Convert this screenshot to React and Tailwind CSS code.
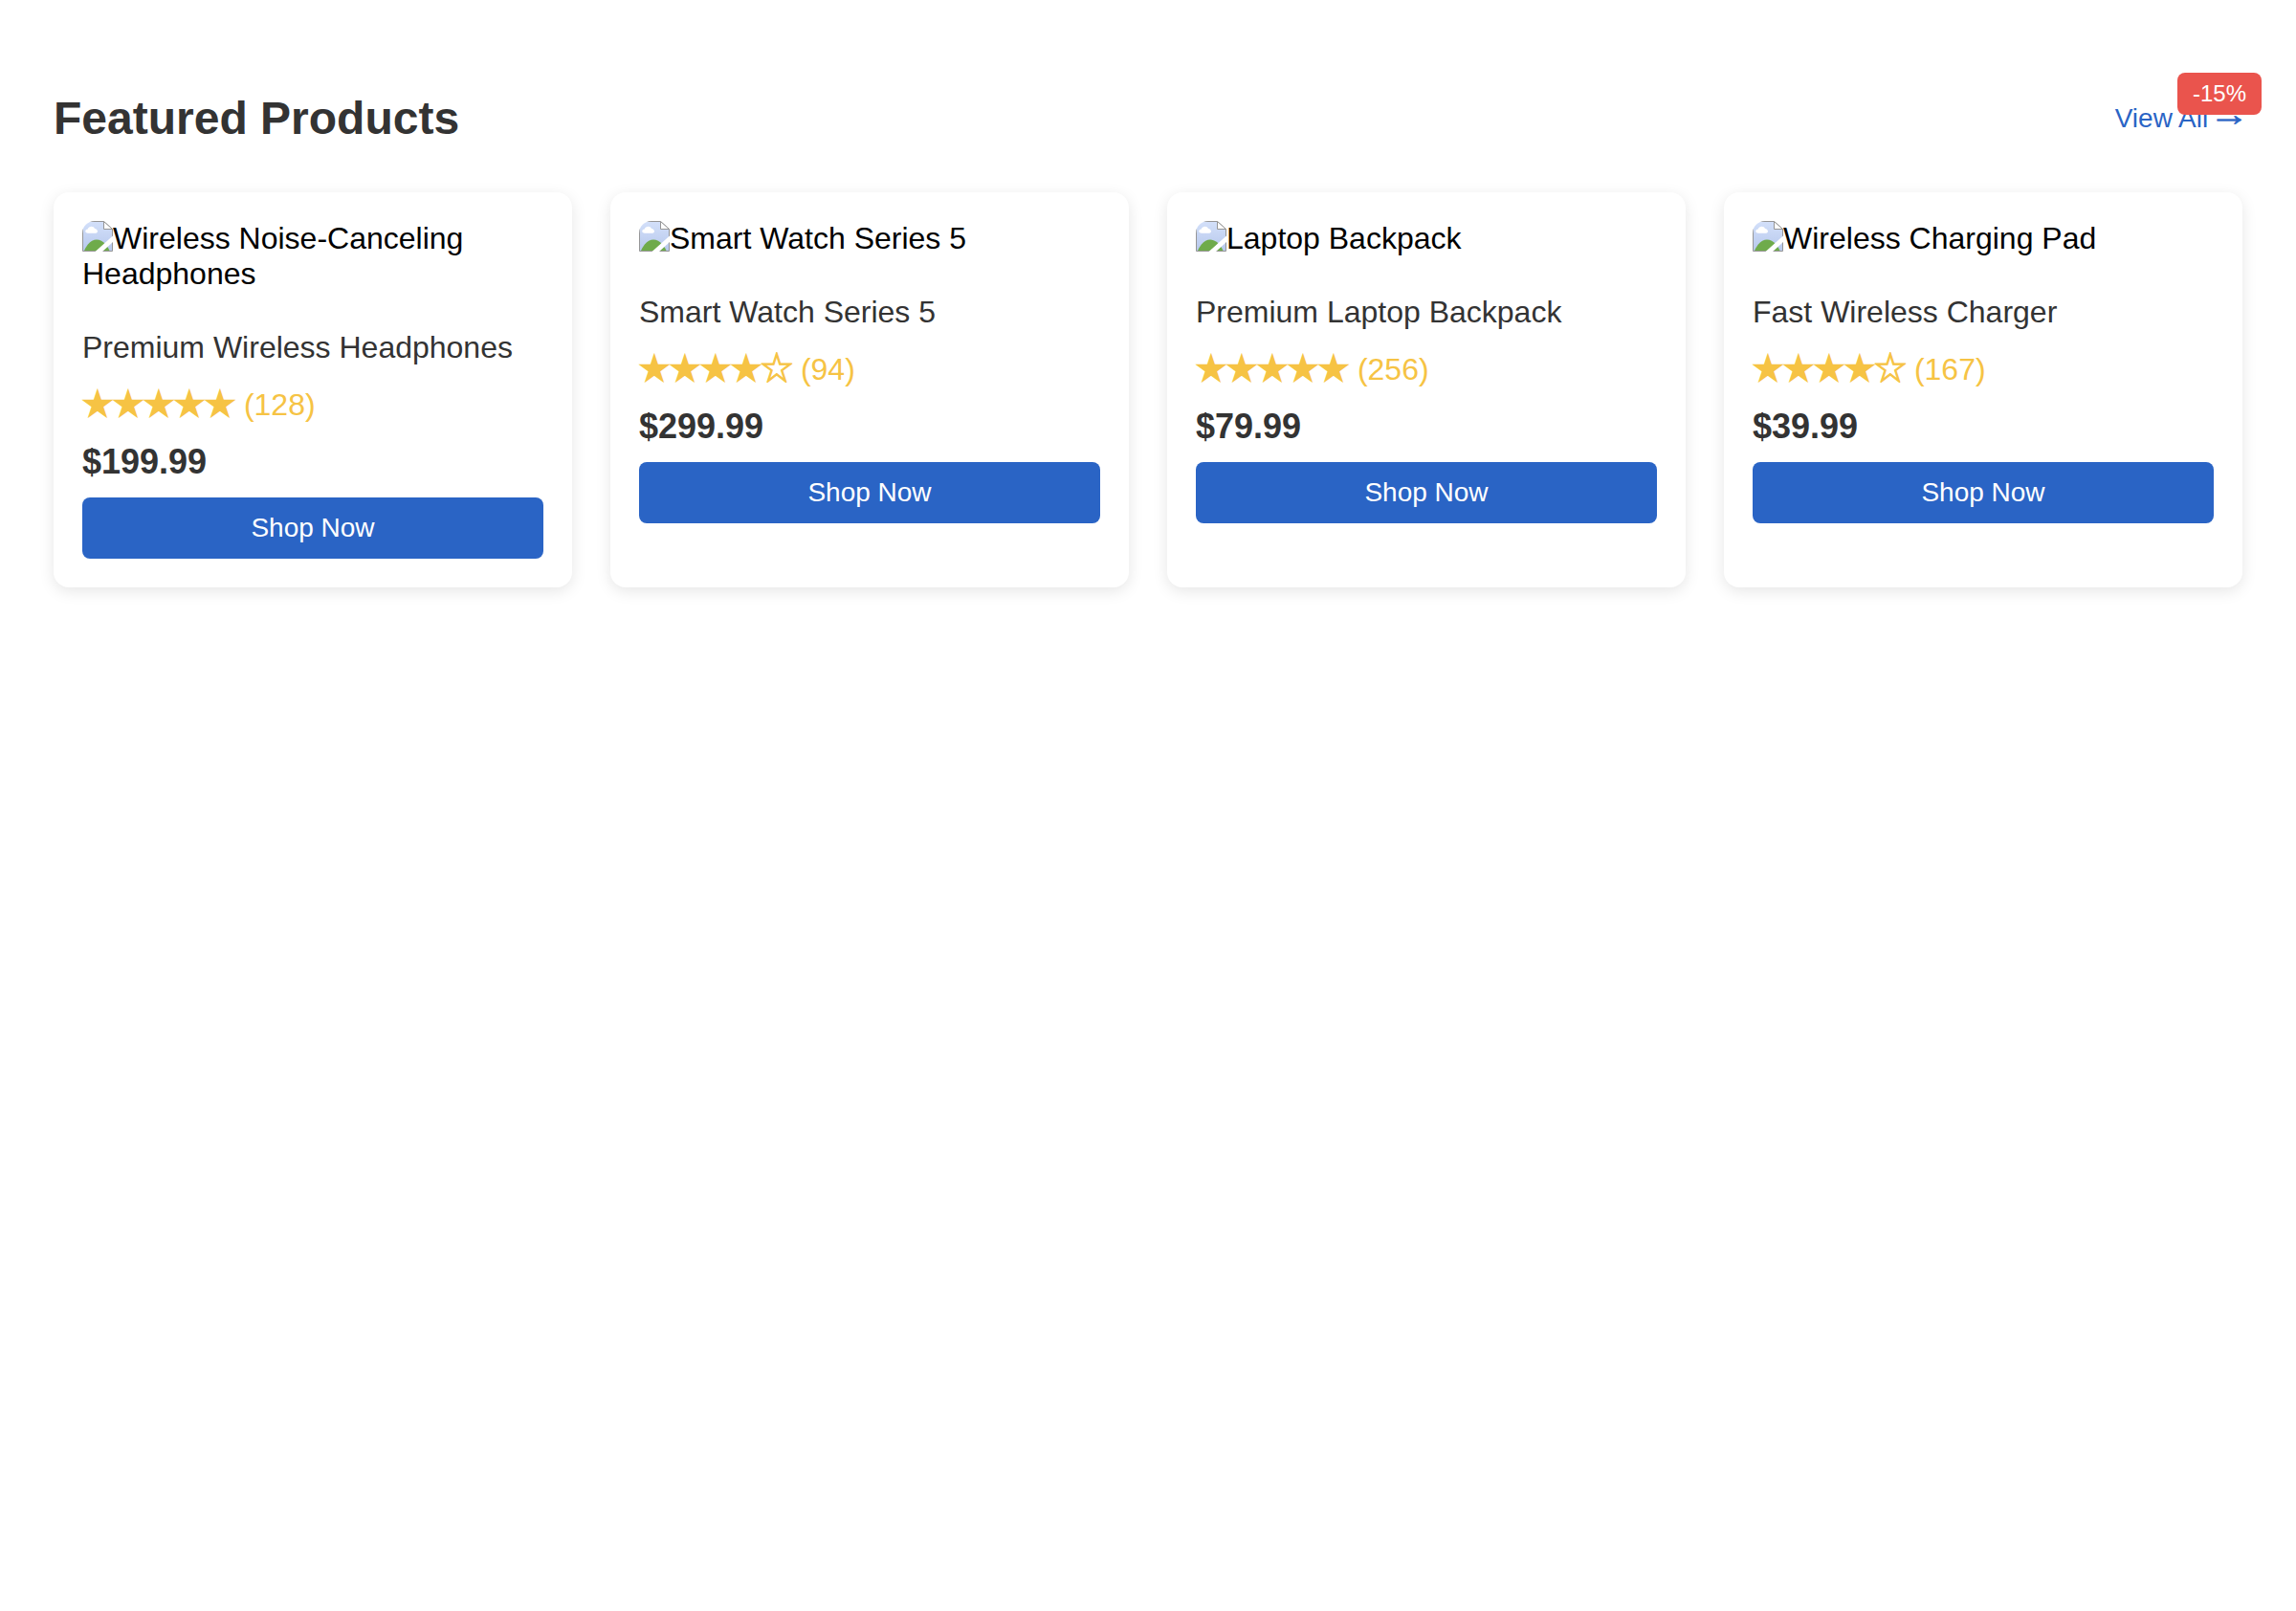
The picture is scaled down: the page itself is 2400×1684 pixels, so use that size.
const products = [
  { alt: 'Wireless Noise-Canceling Headphones', name: 'Premium Wireless Headphones', filled: 5, count: 128, price: '$199.99' },
  { alt: 'Smart Watch Series 5', name: 'Smart Watch Series 5', filled: 4, count: 94, price: '$299.99' },
  { alt: 'Laptop Backpack', name: 'Premium Laptop Backpack', filled: 5, count: 256, price: '$79.99' },
  { alt: 'Wireless Charging Pad', name: 'Fast Wireless Charger', filled: 4, count: 167, price: '$39.99' },
];

function MissingImage() {
  return (
    <svg viewBox="0 0 32 32" className="mt-[-7px] inline-block h-8 w-8 rounded-tl-[13px] align-[-3px]">
      <defs>
        <linearGradient id="sky" x1="0" y1="0" x2="0" y2="1">
          <stop offset="0" stopColor="#d3e0fa" />
          <stop offset="1" stopColor="#b7c8ec" />
        </linearGradient>
      </defs>
      <path d="M0.5 0.5H22.5L31.5 8.5V31.5H0.5Z" fill="url(#sky)" stroke="#969696" />
      <path d="M2 31C5.5 23 10.5 19.5 15 19.5C19.5 19.5 25 23 28.5 31Z" fill="#6fab4b" />
      <path d="M6 12.8C2.5 12.8 2.3 9 5.8 8.6C6.5 5 12 4.8 13 8C16.8 8.4 16.8 12.8 14 12.8Z" fill="#fff" />
      <path d="M32 15.5V22L21 32H13.5Z" fill="#fff" />
      <path d="M22.5 0.5V8.5H31.5Z" fill="#fff" stroke="#969696" />
      <path d="M23.5 0H32V7.8Z" fill="#fff" />
    </svg>
  );
}

function Stars({ filled }) {
  return (
    <span className="-mt-[4.5px] flex h-[37px] font-['Noto_Sans_CJK_JP',sans-serif] text-[35px] leading-[37px]">
      {[0, 1, 2, 3, 4].map((i) =>
        i < filled ? (
          <span key={i} className="flex w-8 justify-center">★</span>
        ) : (
          <span key={i} className="flex w-8 justify-center text-[34px] [-webkit-text-stroke:1px_#f6c344]">☆</span>
        )
      )}
    </span>
  );
}

function ProductCard({ product }) {
  return (
    <div className="rounded-[16px] bg-white p-[30px] shadow-[0_4px_16px_rgba(0,0,0,0.1)]">
      <div className="text-[32px] leading-[37px] text-black">
        <MissingImage />
        {product.alt}
      </div>
      <div className="mt-10 text-[32px] leading-[37px] text-[#333]">{product.name}</div>
      <div className="mt-[23px] flex h-[37px] text-[32px] leading-[37px] text-[#f6c344]">
        <Stars filled={product.filled} />
        <span className="whitespace-pre"> ({product.count})</span>
      </div>
      <div className="mt-[20px] text-[36px] leading-[41px] font-bold text-[#333]">{product.price}</div>
      <button className="mt-[17px] block h-16 w-full rounded-[8px] bg-[#2a64c5] text-[28px] leading-8 text-white">
        Shop Now
      </button>
    </div>
  );
}

export default function App() {
  return (
    <div className="relative min-h-[1684px] bg-white px-14 pt-24 font-['Liberation_Sans',Arial,sans-serif]">
      <div className="flex h-[55px] items-center justify-between">
        <h2 className="text-[48px] leading-[55px] font-bold text-[#333]">Featured Products</h2>
        <a href="#" className="text-[28px] leading-8 text-[#2a64c5]">
          View All <span className="inline-block -translate-y-[4px] scale-x-[1.5] scale-y-[1.2] [-webkit-text-stroke:0.5px_#2a64c5]">→</span>
        </a>
      </div>
      <div className="mt-[50px] grid grid-cols-4 gap-10">
        {products.map((p) => (
          <ProductCard key={p.alt} product={p} />
        ))}
      </div>
      <div className="absolute top-[76px] right-9 rounded-[8px] bg-[#ea544d] px-4 py-2 text-[24px] leading-7 text-white">-15%</div>
    </div>
  );
}
